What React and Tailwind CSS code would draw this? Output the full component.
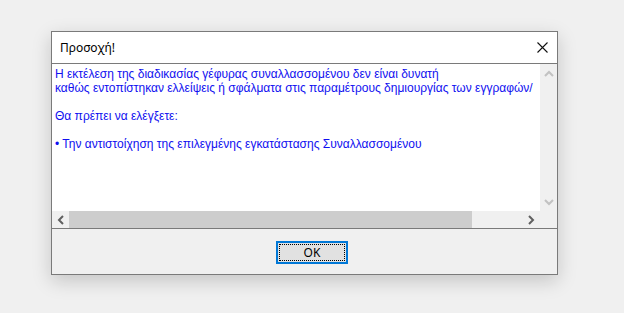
import React from 'react';

const LINES = [
  'Η εκτέλεση της διαδικασίας γέφυρας συναλλασσομένου δεν είναι δυνατή',
  'καθώς εντοπίστηκαν ελλείψεις ή σφάλματα στις παραμέτρους δημιουργίας των εγγραφών/',
  '\u00a0',
  'Θα πρέπει να ελέγξετε:',
  '\u00a0',
  '• Την αντιστοίχηση της επιλεγμένης εγκατάστασης Συναλλασσομένου',
];

function Chevron({ dir }) {
  const paths = {
    up: 'M1 6 L5 2 L9 6',
    down: 'M1 2 L5 6 L9 2',
    left: 'M6 1 L2 5 L6 9',
    right: 'M2 1 L6 5 L2 9',
  };
  const vertical = dir === 'up' || dir === 'down';
  return (
    <svg width={vertical ? 10 : 8} height={vertical ? 8 : 10} viewBox={vertical ? '0 0 10 8' : '0 0 8 10'}>
      <path d={paths[dir]} fill="none" stroke={vertical ? '#c2c2c2' : '#606060'} strokeWidth="2" />
    </svg>
  );
}

export default function App() {
  return (
    <div className="w-[624px] h-[313px] bg-[#f0f0f0] pt-[31px] pl-[51px] overflow-hidden" style={{ fontFamily: '"Liberation Sans", Arial, sans-serif' }}>
      <div className="w-[507px] h-[244px] border border-[#7a7a7a] bg-[#f0f0f0] flex flex-col shadow-[0_6px_18px_rgba(0,0,0,0.18)]">
        {/* title bar */}
        <div className="h-[31px] bg-white flex items-center justify-between pl-[8px] pr-[9px] shrink-0">
          <span className="text-[12px] text-black" style={{ fontFamily: '"Noto Sans", "Open Sans", sans-serif' }}>Προσοχή!</span>
          <svg width="11" height="11" viewBox="0 0 11 11">
            <path d="M0.5 0.5 L10.5 10.5 M10.5 0.5 L0.5 10.5" stroke="#111" strokeWidth="1.1" />
          </svg>
        </div>

        {/* list area */}
        <div className="h-[166px] border-t border-b border-[#7a7a7a] flex flex-col shrink-0">
          <div className="flex flex-1 min-h-0">
            <div className="flex-1 bg-white overflow-hidden pl-[3px] pt-[3px]">
              {LINES.map((l, i) => (
                <div key={i} className="text-[12px] leading-[14px] text-[#1010f0] whitespace-nowrap">{l}</div>
              ))}
            </div>
            <div className="w-[17px] bg-[#f0f0f0] flex flex-col items-center justify-between pt-[6px] pb-[5px]">
              <Chevron dir="up" />
              <Chevron dir="down" />
            </div>
          </div>
          <div className="h-[17px] flex shrink-0">
            <div className="flex-1 bg-[#f0f0f0] flex items-center">
              <div className="w-[17px] flex justify-center"><Chevron dir="left" /></div>
              <div className="w-[403px] h-full bg-[#cdcdcd]" />
              <div className="flex-1 flex justify-end pr-[5px]"><Chevron dir="right" /></div>
            </div>
            <div className="w-[17px] bg-[#f0f0f0]" />
          </div>
        </div>

        {/* footer */}
        <div className="flex-1 flex pl-[224px] pt-[12px]">
          <button className="w-[72px] h-[23px] border-2 border-[#0078d7] bg-[#e1e1e1] p-[1px]">
            <div className="w-full h-full border border-dotted border-black flex items-center justify-center text-[12px] text-black" style={{ fontFamily: '"Noto Sans", "Open Sans", sans-serif' }}>
              OK
            </div>
          </button>
        </div>
      </div>
    </div>
  );
}
